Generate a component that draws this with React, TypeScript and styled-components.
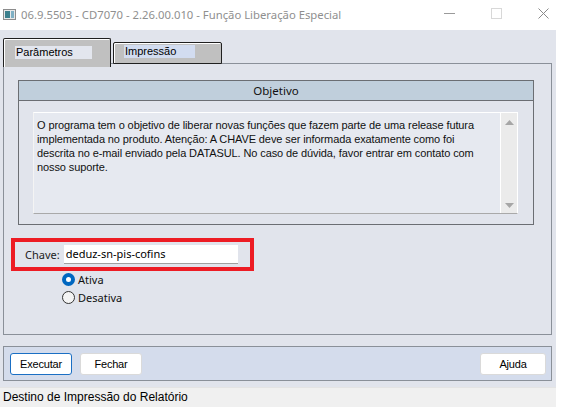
import React from "react";
import styled, { createGlobalStyle } from "styled-components";

const GlobalStyle = createGlobalStyle`
  html, body {
    margin: 0;
    padding: 0;
    background: #ffffff;
  }
  body {
    width: 568px;
    height: 417px;
    overflow: hidden;
    font-family: "Liberation Sans", Arial, sans-serif;
  }
`;

const objetivo =
  "O programa tem o objetivo de liberar novas funções que fazem parte de uma release futura implementada no produto. Atenção: A CHAVE deve ser informada exatamente como foi descrita no e-mail enviado pela DATASUL. No caso de dúvida, favor entrar em contato com nosso suporte.";

const App = () => {
  return (
    <>
      <GlobalStyle />
      <TitleBar>
        <AppIcon viewBox="0 0 13 11">
          <rect x="0.5" y="0.5" width="12" height="10" fill="#e8e8e8" stroke="#8c8c8c" />
          <rect x="2" y="2" width="5" height="7" fill="#3c7f8c" />
          <rect x="8" y="2" width="3" height="7" fill="#7fb0c4" />
        </AppIcon>
        <Title>06.9.5503 - CD7070 - 2.26.00.010 - Função Liberação Especial</Title>
        <WindowButtons>
          <WinButton>
            <svg width="11" height="11" viewBox="0 0 11 11">
              <line x1="0" y1="5.5" x2="11" y2="5.5" stroke="#9a9a9a" />
            </svg>
          </WinButton>
          <WinButton>
            <svg width="11" height="11" viewBox="0 0 11 11">
              <rect x="0.5" y="0.5" width="10" height="10" fill="none" stroke="#d8d8d8" />
            </svg>
          </WinButton>
          <WinButton>
            <svg width="11" height="11" viewBox="0 0 11 11">
              <path d="M0.5 0.5 L10.5 10.5 M10.5 0.5 L0.5 10.5" stroke="#8a8a8a" />
            </svg>
          </WinButton>
        </WindowButtons>
      </TitleBar>
      <Body>
        <TabStrip>
          <Tab $active>
            <TabLabel $active>Parâmetros</TabLabel>
          </Tab>
          <Tab>
            <TabLabel>Impressão</TabLabel>
          </Tab>
        </TabStrip>
        <TabPanel>
          <Group>
            <GroupHeader>Objetivo</GroupHeader>
            <GroupBody>
              <TextArea>
                <TextContent>{objetivo}</TextContent>
                <ScrollBar>
                  <svg width="9" height="5" viewBox="0 0 9 5">
                    <polygon points="0,5 4.5,0 9,5" fill="#a6a6a6" />
                  </svg>
                  <svg width="9" height="5" viewBox="0 0 9 5">
                    <polygon points="0,0 4.5,5 9,0" fill="#a6a6a6" />
                  </svg>
                </ScrollBar>
              </TextArea>
            </GroupBody>
          </Group>
          <KeyBox>
            <KeyLabel>Chave:</KeyLabel>
            <KeyInput>deduz-sn-pis-cofins</KeyInput>
          </KeyBox>
          <RadioList>
            <RadioRow>
              <Radio $checked />
              <span>Ativa</span>
            </RadioRow>
            <RadioRow>
              <Radio />
              <span>Desativa</span>
            </RadioRow>
          </RadioList>
        </TabPanel>
        <ButtonBar>
          <Button $focused>Executar</Button>
          <Button>Fechar</Button>
          <Spacer />
          <Button $wide>Ajuda</Button>
        </ButtonBar>
      </Body>
      <StatusBar>Destino de Impressão do Relatório</StatusBar>
    </>
  );
};

const TitleBar = styled.div`
  height: 30px;
  display: flex;
  align-items: center;
  padding-left: 3px;
  background: #ffffff;
`;

const AppIcon = styled.svg`
  width: 13px;
  height: 11px;
  margin-right: 5px;
  margin-top: -1px;
`;

const Title = styled.span`
  font-family: "Noto Sans", "Open Sans", sans-serif;
  font-size: 11.3px;
  color: #8f8f8f;
  margin-top: -1px;
`;

const WindowButtons = styled.div`
  margin-left: auto;
  display: flex;
  padding-right: 1px;
`;

const WinButton = styled.div`
  width: 47px;
  display: flex;
  justify-content: center;
  align-items: center;
  margin-top: -3px;
`;

const Body = styled.div`
  width: 556px;
  height: 357px;
  background: #e1e4ec;
  box-sizing: border-box;
  padding: 8px 4px 0 3px;
  display: flex;
  flex-direction: column;
`;

const TabStrip = styled.div`
  height: 25px;
  display: flex;
  align-items: flex-start;
  gap: 2px;
`;

const Tab = styled.div<{ $active?: boolean }>`
  position: relative;
  z-index: ${(p) => (p.$active ? 2 : 1)};
  box-sizing: border-box;
  width: ${(p) => (p.$active ? "108px" : "109px")};
  height: ${(p) => (p.$active ? "29px" : "22px")};
  margin-top: ${(p) => (p.$active ? "0" : "4px")};
  background: #c0c0c0;
  border: 1px solid #202020;
  border-bottom: ${(p) => (p.$active ? "none" : "1px solid #202020")};
  border-radius: 2px 2px 0 0;
  box-shadow: inset 1px 1px 0 #ffffff;
  padding: ${(p) => (p.$active ? "7px 0 0 11px" : "2px 0 0 10px")};
`;

const TabLabel = styled.div<{ $active?: boolean }>`
  width: ${(p) => (p.$active ? "77px" : "71px")};
  height: 13px;
  background: ${(p) => (p.$active ? "#e3e6ee" : "#d2dcf0")};
  font-size: 11px;
  line-height: 13px;
  color: #000000;
  padding-left: 1px;
  box-sizing: border-box;
`;

const TabPanel = styled.div`
  height: 272px;
  box-sizing: border-box;
  border: 1px solid #8a9099;
  padding: 16px 17px 0 14px;
  display: flex;
  flex-direction: column;
`;

const Group = styled.div`
  height: 145px;
  box-sizing: border-box;
  border: 1px solid #6b6e73;
  display: flex;
  flex-direction: column;
`;

const GroupHeader = styled.div`
  height: 20px;
  box-sizing: border-box;
  background: #c0cfdc;
  border-bottom: 1px solid #6b6e73;
  text-align: center;
  font-family: "Noto Sans", "Open Sans", sans-serif;
  font-size: 11.5px;
  line-height: 19px;
  color: #111111;
`;

const GroupBody = styled.div`
  flex: 1;
  padding: 11px 15px 10px 14px;
  display: flex;
`;

const TextArea = styled.div`
  flex: 1;
  display: flex;
  background: #e6e9f0;
  border: 1px solid #ffffff;
  border-bottom-color: #a9a9a9;
  border-left-color: #f4f4f4;
`;

const TextContent = styled.div`
  flex: 1;
  padding: 5px 12px 0 3px;
  font-family: "Liberation Sans", Arial, sans-serif;
  font-size: 11px;
  line-height: 14px;
  letter-spacing: -0.1px;
  color: #111111;
`;

const ScrollBar = styled.div`
  width: 16px;
  background: #ebebeb;
  border-left: 1px solid #ffffff;
  display: flex;
  flex-direction: column;
  align-items: center;
  justify-content: space-between;
  padding: 7px 0 5px;
`;

const KeyBox = styled.div`
  margin-top: 13px;
  margin-left: -7px;
  width: 243px;
  height: 33px;
  box-sizing: border-box;
  border: 4px solid #ed1c24;
  display: flex;
  align-items: center;
  padding-left: 10px;
`;

const KeyLabel = styled.span`
  font-family: "Noto Sans", "Open Sans", sans-serif;
  font-size: 11px;
  color: #222222;
  margin-right: 4px;
`;

const KeyInput = styled.div`
  width: 174px;
  height: 19px;
  box-sizing: border-box;
  background: #ffffff;
  border-bottom: 1px solid #a0a0a0;
  font-family: "Noto Sans", "Open Sans", sans-serif;
  font-size: 11px;
  line-height: 18px;
  padding-left: 2px;
  color: #000000;
`;

const RadioList = styled.div`
  margin-top: 2px;
  margin-left: 44px;
  display: flex;
  flex-direction: column;
  gap: 5px;
`;

const RadioRow = styled.div`
  display: flex;
  align-items: center;
  gap: 3px;
  height: 13px;
  font-family: "Noto Sans", "Open Sans", sans-serif;
  font-size: 11px;
  color: #111111;
`;

const Radio = styled.span<{ $checked?: boolean }>`
  width: 13px;
  height: 13px;
  box-sizing: border-box;
  border-radius: 50%;
  background: ${(p) => (p.$checked ? "#ffffff" : "#f4f4f4")};
  border: ${(p) => (p.$checked ? "4px solid #0067c0" : "1px solid #333333")};
`;

const ButtonBar = styled.div`
  margin-top: 11px;
  height: 35px;
  box-sizing: border-box;
  border: 1px solid #8a9099;
  background: #d4dcec;
  display: flex;
  align-items: center;
  padding: 0 5px 0 6px;
  gap: 8px;
`;

const Spacer = styled.div`
  flex: 1;
`;

const Button = styled.div<{ $focused?: boolean; $wide?: boolean }>`
  width: ${(p) => (p.$wide ? "66px" : "62px")};
  height: 22px;
  box-sizing: border-box;
  background: #ffffff;
  border: 1px solid ${(p) => (p.$focused ? "#1a6fc4" : "#dadada")};
  border-radius: 3px;
  display: flex;
  align-items: center;
  justify-content: center;
  font-family: "Liberation Sans", Arial, sans-serif;
  font-size: 11px;
  letter-spacing: -0.2px;
  color: #000000;
`;

const StatusBar = styled.div`
  width: 556px;
  height: 20px;
  box-sizing: border-box;
  background: #f0f0f0;
  border-top: 1px solid #e4e4e4;
  padding-left: 3px;
  font-family: "Liberation Sans", Arial, sans-serif;
  font-size: 12px;
  line-height: 19px;
  color: #000000;
`;

export default App;
